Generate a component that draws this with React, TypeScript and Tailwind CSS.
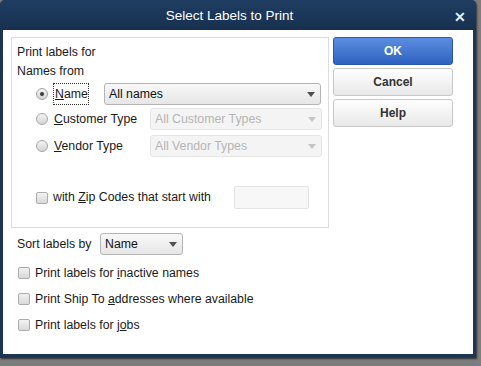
import React from "react";

function Radio({ checked }: { checked?: boolean }) {
  return (
    <span className="w-[12px] h-[12px] rounded-full border border-[#a6a6a6] bg-gradient-to-b from-[#f4f4f4] to-[#d4d4d4] flex items-center justify-center shrink-0">
      {checked && <span className="w-[4px] h-[4px] rounded-full bg-[#3a3a3a]" />}
    </span>
  );
}

function Check() {
  return (
    <span className="w-[12px] h-[12px] rounded-[2px] border border-[#acacac] bg-gradient-to-b from-[#f2f2f2] to-[#d9d9d9] shrink-0" />
  );
}

function Arrow({ light }: { light?: boolean }) {
  return (
    <svg width="8" height="5" viewBox="0 0 8 5">
      <path d="M0 0 L8 0 L4 5 Z" fill={light ? "#c4c4c4" : "#505050"} />
    </svg>
  );
}

function Select({ text, width, disabled }: { text: string; width: string; disabled?: boolean }) {
  return (
    <div
      className={`${width} h-[22px] rounded-[3px] border flex items-center justify-between pl-[4px] pr-[5px] ${
        disabled ? "border-[#e6e6e6] bg-[#f4f4f4] text-[#b4b4b4]" : "border-[#b4b4b4] bg-gradient-to-b from-[#f8f8f8] to-[#e6e6e6] text-[#111]"
      }`}
    >
      <span>{text}</span>
      <Arrow light={disabled} />
    </div>
  );
}

function Button({ label, primary }: { label: string; primary?: boolean }) {
  return (
    <div
      className={`h-[28px] rounded-[3px] border flex items-center justify-center font-bold text-[12px] ${
        primary
          ? "border-[#2a58a8] bg-gradient-to-b from-[#5b8ee0] to-[#2f62c0] text-white"
          : "border-[#c8c8c8] bg-gradient-to-b from-[#ffffff] to-[#e8e8e8] text-[#333]"
      }`}
    >
      {label}
    </div>
  );
}

export default function App() {
  return (
    <div className="w-[481px] h-[366px] bg-[#7d7d7d] font-['Liberation_Sans',Arial,sans-serif] text-[12.3px] text-[#1a1a1a]">
      <div className="w-[476px] h-[358px] bg-[#1b3553] rounded-t-[5px] flex flex-col px-[3px] pb-[4px] shadow-[1px_1px_2px_rgba(0,0,0,0.6)]">
        <div className="h-[30px] shrink-0 relative flex items-center justify-center pr-[17px] bg-gradient-to-b from-[#1f3d62] to-[#17304f] -mx-[3px] rounded-t-[5px]">
          <span className="text-white text-[13.5px] mt-[3px]">Select Labels to Print</span>
          <span className="absolute right-[10px] top-[10px] text-[#e8edf2] text-[14px] font-bold leading-[14px]">✕</span>
        </div>
        <div className="flex-1 bg-white flex pt-[7px] pl-[8px] pr-[20px]">
          <div className="w-[318px] flex flex-col">
            <div className="h-[191px] border border-[#dcdcdc] flex flex-col pl-[5px] pt-[5px]">
              <div className="leading-[19px]">
                Print labels for
                <br />
                Names from
              </div>
              <div className="flex items-center h-[22px] mt-[2px] pl-[19px]">
                <Radio checked />
                <span className="ml-[5px] px-[1px] border border-dotted border-[#333] w-[36px] h-[22px] flex items-center">
                  <u>N</u>ame
                </span>
                <div className="ml-[15px]">
                  <Select text="All names" width="w-[217px]" />
                </div>
              </div>
              <div className="flex items-center h-[22px] mt-[3px] pl-[19px]">
                <Radio />
                <span className="ml-[6px] w-[96px]">
                  <u>C</u>ustomer Type
                </span>
                <Select text="All Customer Types" width="w-[172px]" disabled />
              </div>
              <div className="flex items-center h-[22px] mt-[5px] pl-[19px]">
                <Radio />
                <span className="ml-[6px] w-[96px]">
                  <u>V</u>endor Type
                </span>
                <Select text="All Vendor Types" width="w-[172px]" disabled />
              </div>
              <div className="flex items-center h-[23px] mt-[29px] pl-[19px]">
                <Check />
                <span className="ml-[5px] w-[181px]">
                  with <u>Z</u>ip Codes that start with
                </span>
                <div className="w-[75px] h-[23px] border border-[#e4e4e4] bg-[#f7f7f7] rounded-[2px]" />
              </div>
            </div>
            <div className="flex items-center mt-[5px] pl-[6px] h-[22px]">
              <span className="w-[83px]">Sort labels by</span>
              <Select text="Name" width="w-[83px]" />
            </div>
            <div className="flex flex-col pl-[7px] mt-[12px] gap-[14px] leading-[12px]">
              <div className="flex items-center h-[12px]">
                <Check />
                <span className="ml-[5px]">
                  Print labels for <u>i</u>nactive names
                </span>
              </div>
              <div className="flex items-center h-[12px]">
                <Check />
                <span className="ml-[5px]">
                  Print Ship To <u>a</u>ddresses where available
                </span>
              </div>
              <div className="flex items-center h-[12px]">
                <Check />
                <span className="ml-[5px]">
                  Print labels for j<u>o</u>bs
                </span>
              </div>
            </div>
          </div>
          <div className="ml-[4px] flex-1 flex flex-col gap-[3px]">
            <Button label="OK" primary />
            <Button label="Cancel" />
            <Button label="Help" />
          </div>
        </div>
      </div>
    </div>
  );
}
